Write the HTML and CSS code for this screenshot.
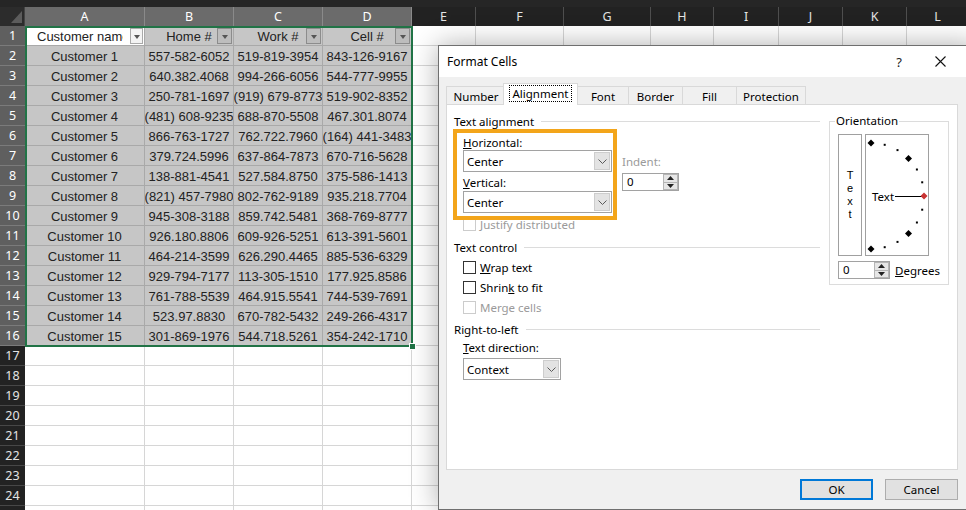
FILE: index.html
```html
<!DOCTYPE html>
<html>
<head>
<meta charset="utf-8">
<title>Format Cells</title>
<link rel="stylesheet" href="styles.css">
</head>
<body>
<div class="sheet">
  <div class="strip"></div>
  <div class="grid">
    <div class="row">
      <div class="corner"><svg width="25" height="19" viewBox="0 0 25 19"><path d="M11 16 L22 4 L22 16 Z" fill="#5c5c5c"/></svg></div>
      <div class="ch s">A</div><div class="ch s">B</div><div class="ch s">C</div><div class="ch s">D</div>
      <div class="ch">E</div><div class="ch">F</div><div class="ch">G</div><div class="ch">H</div><div class="ch">I</div><div class="ch">J</div><div class="ch">K</div><div class="ch">L</div>
    </div>
    <div class="row">
      <div class="rh s">1</div>
      <div class="c s a1"><span class="t">Customer name</span><span class="fb"></span></div>
      <div class="c s"><span class="t">Home #</span><span class="fb"></span></div>
      <div class="c s"><span class="t">Work #</span><span class="fb"></span></div>
      <div class="c s"><span class="t">Cell #</span><span class="fb"></span></div>
      <div class="c"></div><div class="c"></div><div class="c"></div><div class="c"></div><div class="c"></div><div class="c"></div><div class="c"></div><div class="c"></div>
    </div>
    <div class="row"><div class="rh s">2</div><div class="c s">Customer 1</div><div class="c s">557-582-6052</div><div class="c s">519-819-3954</div><div class="c s">843-126-9167</div><div class="c"></div><div class="c"></div><div class="c"></div><div class="c"></div><div class="c"></div><div class="c"></div><div class="c"></div><div class="c"></div></div>
    <div class="row"><div class="rh s">3</div><div class="c s">Customer 2</div><div class="c s">640.382.4068</div><div class="c s">994-266-6056</div><div class="c s">544-777-9955</div><div class="c"></div><div class="c"></div><div class="c"></div><div class="c"></div><div class="c"></div><div class="c"></div><div class="c"></div><div class="c"></div></div>
    <div class="row"><div class="rh s">4</div><div class="c s">Customer 3</div><div class="c s">250-781-1697</div><div class="c s">(919) 679-8773</div><div class="c s">519-902-8352</div><div class="c"></div><div class="c"></div><div class="c"></div><div class="c"></div><div class="c"></div><div class="c"></div><div class="c"></div><div class="c"></div></div>
    <div class="row"><div class="rh s">5</div><div class="c s">Customer 4</div><div class="c s">(481) 608-9235</div><div class="c s">688-870-5508</div><div class="c s">467.301.8074</div><div class="c"></div><div class="c"></div><div class="c"></div><div class="c"></div><div class="c"></div><div class="c"></div><div class="c"></div><div class="c"></div></div>
    <div class="row"><div class="rh s">6</div><div class="c s">Customer 5</div><div class="c s">866-763-1727</div><div class="c s">762.722.7960</div><div class="c s">(164) 441-3483</div><div class="c"></div><div class="c"></div><div class="c"></div><div class="c"></div><div class="c"></div><div class="c"></div><div class="c"></div><div class="c"></div></div>
    <div class="row"><div class="rh s">7</div><div class="c s">Customer 6</div><div class="c s">379.724.5996</div><div class="c s">637-864-7873</div><div class="c s">670-716-5628</div><div class="c"></div><div class="c"></div><div class="c"></div><div class="c"></div><div class="c"></div><div class="c"></div><div class="c"></div><div class="c"></div></div>
    <div class="row"><div class="rh s">8</div><div class="c s">Customer 7</div><div class="c s">138-881-4541</div><div class="c s">527.584.8750</div><div class="c s">375-586-1413</div><div class="c"></div><div class="c"></div><div class="c"></div><div class="c"></div><div class="c"></div><div class="c"></div><div class="c"></div><div class="c"></div></div>
    <div class="row"><div class="rh s">9</div><div class="c s">Customer 8</div><div class="c s">(821) 457-7980</div><div class="c s">802-762-9189</div><div class="c s">935.218.7704</div><div class="c"></div><div class="c"></div><div class="c"></div><div class="c"></div><div class="c"></div><div class="c"></div><div class="c"></div><div class="c"></div></div>
    <div class="row"><div class="rh s">10</div><div class="c s">Customer 9</div><div class="c s">945-308-3188</div><div class="c s">859.742.5481</div><div class="c s">368-769-8777</div><div class="c"></div><div class="c"></div><div class="c"></div><div class="c"></div><div class="c"></div><div class="c"></div><div class="c"></div><div class="c"></div></div>
    <div class="row"><div class="rh s">11</div><div class="c s">Customer 10</div><div class="c s">926.180.8806</div><div class="c s">609-926-5251</div><div class="c s">613-391-5601</div><div class="c"></div><div class="c"></div><div class="c"></div><div class="c"></div><div class="c"></div><div class="c"></div><div class="c"></div><div class="c"></div></div>
    <div class="row"><div class="rh s">12</div><div class="c s">Customer 11</div><div class="c s">464-214-3599</div><div class="c s">626.290.4465</div><div class="c s">885-536-6329</div><div class="c"></div><div class="c"></div><div class="c"></div><div class="c"></div><div class="c"></div><div class="c"></div><div class="c"></div><div class="c"></div></div>
    <div class="row"><div class="rh s">13</div><div class="c s">Customer 12</div><div class="c s">929-794-7177</div><div class="c s">113-305-1510</div><div class="c s">177.925.8586</div><div class="c"></div><div class="c"></div><div class="c"></div><div class="c"></div><div class="c"></div><div class="c"></div><div class="c"></div><div class="c"></div></div>
    <div class="row"><div class="rh s">14</div><div class="c s">Customer 13</div><div class="c s">761-788-5539</div><div class="c s">464.915.5541</div><div class="c s">744-539-7691</div><div class="c"></div><div class="c"></div><div class="c"></div><div class="c"></div><div class="c"></div><div class="c"></div><div class="c"></div><div class="c"></div></div>
    <div class="row"><div class="rh s">15</div><div class="c s">Customer 14</div><div class="c s">523.97.8830</div><div class="c s">670-782-5432</div><div class="c s">249-266-4317</div><div class="c"></div><div class="c"></div><div class="c"></div><div class="c"></div><div class="c"></div><div class="c"></div><div class="c"></div><div class="c"></div></div>
    <div class="row"><div class="rh s">16</div><div class="c s">Customer 15</div><div class="c s">301-869-1976</div><div class="c s">544.718.5261</div><div class="c s">354-242-1710</div><div class="c"></div><div class="c"></div><div class="c"></div><div class="c"></div><div class="c"></div><div class="c"></div><div class="c"></div><div class="c"></div></div>
    <div class="row"><div class="rh">17</div><div class="c"></div><div class="c"></div><div class="c"></div><div class="c"></div><div class="c"></div><div class="c"></div><div class="c"></div><div class="c"></div><div class="c"></div><div class="c"></div><div class="c"></div><div class="c"></div></div>
    <div class="row"><div class="rh">18</div><div class="c"></div><div class="c"></div><div class="c"></div><div class="c"></div><div class="c"></div><div class="c"></div><div class="c"></div><div class="c"></div><div class="c"></div><div class="c"></div><div class="c"></div><div class="c"></div></div>
    <div class="row"><div class="rh">19</div><div class="c"></div><div class="c"></div><div class="c"></div><div class="c"></div><div class="c"></div><div class="c"></div><div class="c"></div><div class="c"></div><div class="c"></div><div class="c"></div><div class="c"></div><div class="c"></div></div>
    <div class="row"><div class="rh">20</div><div class="c"></div><div class="c"></div><div class="c"></div><div class="c"></div><div class="c"></div><div class="c"></div><div class="c"></div><div class="c"></div><div class="c"></div><div class="c"></div><div class="c"></div><div class="c"></div></div>
    <div class="row"><div class="rh">21</div><div class="c"></div><div class="c"></div><div class="c"></div><div class="c"></div><div class="c"></div><div class="c"></div><div class="c"></div><div class="c"></div><div class="c"></div><div class="c"></div><div class="c"></div><div class="c"></div></div>
    <div class="row"><div class="rh">22</div><div class="c"></div><div class="c"></div><div class="c"></div><div class="c"></div><div class="c"></div><div class="c"></div><div class="c"></div><div class="c"></div><div class="c"></div><div class="c"></div><div class="c"></div><div class="c"></div></div>
    <div class="row"><div class="rh">23</div><div class="c"></div><div class="c"></div><div class="c"></div><div class="c"></div><div class="c"></div><div class="c"></div><div class="c"></div><div class="c"></div><div class="c"></div><div class="c"></div><div class="c"></div><div class="c"></div></div>
    <div class="row"><div class="rh">24</div><div class="c"></div><div class="c"></div><div class="c"></div><div class="c"></div><div class="c"></div><div class="c"></div><div class="c"></div><div class="c"></div><div class="c"></div><div class="c"></div><div class="c"></div><div class="c"></div></div>
    <div class="row"><div class="rh"></div><div class="c"></div><div class="c"></div><div class="c"></div><div class="c"></div><div class="c"></div><div class="c"></div><div class="c"></div><div class="c"></div><div class="c"></div><div class="c"></div><div class="c"></div><div class="c"></div></div>
  </div>
  <div class="selbox"><span class="handle"></span></div>
</div>

<div class="dialog">
  <div class="titlebar">
    <span class="title">Format Cells</span>
    <span class="help">?</span>
    <svg class="close" width="11" height="11" viewBox="0 0 11 11"><path d="M0.5 0.5 L10.5 10.5 M10.5 0.5 L0.5 10.5" stroke="#111" stroke-width="1.1" fill="none"/></svg>
  </div>
  <div class="tabs">
    <div class="tab w-number">Number</div>
    <div class="tab on w-align"><span class="focus">Alignment</span></div>
    <div class="tab w-font">Font</div>
    <div class="tab w-border">Border</div>
    <div class="tab w-fill">Fill</div>
    <div class="tab w-prot">Protection</div>
  </div>
  <div class="panel">
    <div class="left">
      <div class="gh">Text alignment</div>
      <div class="alignbody">
        <div class="col1">
          <div class="lbl"><u>H</u>orizontal:</div>
          <div class="combo"><span class="val">Center</span><span class="dd"><svg width="9" height="5" viewBox="0 0 9 5"><path d="M0.5 0.5 L4.5 4.5 L8.5 0.5" fill="none" stroke="#5a5a5a"/></svg></span></div>
          <div class="lbl lbl-v"><u>V</u>ertical:</div>
          <div class="combo combo-v"><span class="val">Center</span><span class="dd"><svg width="9" height="5" viewBox="0 0 9 5"><path d="M0.5 0.5 L4.5 4.5 L8.5 0.5" fill="none" stroke="#5a5a5a"/></svg></span></div>
        </div>
        <div class="col2">
          <div class="lbl dis indent">Indent:</div>
          <div class="spin"><span class="val">0</span><span class="btns"><span class="sb"><svg width="7" height="4" viewBox="0 0 7 4"><path d="M0 4 L3.5 0 L7 4 Z" fill="#222"/></svg></span><span class="sb"><svg width="7" height="4" viewBox="0 0 7 4"><path d="M0 0 L3.5 4 L7 0 Z" fill="#222"/></svg></span></span></div>
        </div>
      </div>
      <div class="chk justify dis"><span class="box"></span><span>Justify distributed</span></div>

      <div class="gh gh-tc">Text control</div>
      <div class="chk first"><span class="box on"></span><span><u>W</u>rap text</span></div>
      <div class="chk"><span class="box on"></span><span>Shrin<u>k</u> to fit</span></div>
      <div class="chk dis"><span class="box"></span><span>Merge cells</span></div>

      <div class="gh gh-rtl">Right-to-left</div>
      <div class="lbl lbl-dir"><u>T</u>ext direction:</div>
      <div class="combo combo-ctx"><span class="val">Context</span><span class="dd"><svg width="9" height="5" viewBox="0 0 9 5"><path d="M0.5 0.5 L4.5 4.5 L8.5 0.5" fill="none" stroke="#5a5a5a"/></svg></span></div>
    </div>

    <fieldset class="orient">
      <legend>Orientation</legend>
      <div class="orow">
        <div class="vtext"><span>T</span><span>e</span><span>x</span><span>t</span></div>
        <div class="dial">
          <svg width="62" height="120" viewBox="0 0 62 120">
            <path d="M5 4.5 L8.5 8 L5 11.5 L1.5 8 Z" fill="#000"/>
            <path d="M42.5 20 L46 23.5 L42.5 27 L39 23.5 Z" fill="#000"/>
            <path d="M42.5 95 L46 98.5 L42.5 102 L39 98.5 Z" fill="#000"/>
            <path d="M5 110.5 L8.5 114 L5 117.5 L1.5 114 Z" fill="#000"/>
            <rect x="17.7" y="8.8" width="2" height="2" fill="#000"/>
            <rect x="30.5" y="14.1" width="2" height="2" fill="#000"/>
            <rect x="49.9" y="33.5" width="2" height="2" fill="#000"/>
            <rect x="55.2" y="46.3" width="2" height="2" fill="#000"/>
            <rect x="55.2" y="73.7" width="2" height="2" fill="#000"/>
            <rect x="49.9" y="86.5" width="2" height="2" fill="#000"/>
            <rect x="30.5" y="105.9" width="2" height="2" fill="#000"/>
            <rect x="17.7" y="111.2" width="2" height="2" fill="#000"/>
            <line x1="29" y1="61.5" x2="56" y2="61.5" stroke="#000" stroke-width="1"/>
            <path d="M58 57.5 L61.5 61 L58 64.5 L54.5 61 Z" fill="#c83232"/>
            <text x="6" y="65.5" class="dialtext">Text</text>
          </svg>
        </div>
      </div>
      <div class="degrow">
        <div class="spin spin-deg"><span class="val">0</span><span class="btns"><span class="sb"><svg width="7" height="4" viewBox="0 0 7 4"><path d="M0 4 L3.5 0 L7 4 Z" fill="#222"/></svg></span><span class="sb"><svg width="7" height="4" viewBox="0 0 7 4"><path d="M0 0 L3.5 4 L7 0 Z" fill="#222"/></svg></span></span></div>
        <span class="deg"><u>D</u>egrees</span>
      </div>
    </fieldset>

    <div class="highlight"></div>
  </div>
  <div class="actions">
    <div class="btn def">OK</div>
    <div class="btn">Cancel</div>
  </div>
</div>
</body>
</html>
```
FILE: styles.css
```css
html, body {
  margin: 0;
  padding: 0;
}
body {
  width: 966px;
  height: 510px;
  overflow: hidden;
  position: relative;
  background: #ffffff;
  font-family: "Liberation Sans", Arial, sans-serif;
}

/* ---------- spreadsheet ---------- */
.sheet {
  position: relative;
}
.strip {
  height: 7px;
  background: #262626;
}
.grid {
  display: grid;
  grid-template-columns: 25px 120px 89px 89px 89px 64px 88px 87px 63px 65px 64px 64px 62px;
  grid-template-rows: 19px;
  grid-auto-rows: 20px;
}
.row {
  display: contents;
}
.corner {
  background: #2c2c2c;
  border-right: 1px solid #444;
}
.corner svg {
  display: block;
}
.ch {
  background: #222222;
  color: #e4e4e4;
  border-right: 1px solid #4e4e4e;
  display: flex;
  align-items: center;
  justify-content: center;
  font: 12.5px "Noto Sans", sans-serif;
}
.ch.s {
  background: #6b6b6b;
  color: #ffffff;
  border-right-color: #8a8a8a;
}
.rh {
  background: #222222;
  color: #e4e4e4;
  border-bottom: 1px solid #474747;
  display: flex;
  align-items: center;
  justify-content: center;
  font: 12.5px "Noto Sans", sans-serif;
}
.rh.s {
  background: #5f5f5f;
  color: #ffffff;
  border-bottom-color: #7b7b7b;
}
.c {
  position: relative;
  border-right: 1px solid #d6d6d6;
  border-bottom: 1px solid #d6d6d6;
  display: flex;
  align-items: center;
  justify-content: center;
  overflow: hidden;
  white-space: nowrap;
  font-size: 13px;
  color: #222;
  padding-top: 1px;
}
.c.s {
  background: #c6c6c6;
  border-color: #a9a9a9;
}
.c.a1 {
  background: #ffffff;
  justify-content: flex-start;
  padding-left: 12px;
}
.c .t {
  flex: none;
}
.c.a1 .t {
  width: 86px;
  overflow: hidden;
}
.fb {
  position: absolute;
  right: 1px;
  top: 2px;
  width: 15px;
  height: 16px;
  box-sizing: border-box;
  border: 1px solid #8c8c8c;
  background: #bdbdbd;
  display: flex;
  align-items: center;
  justify-content: center;
}
.a1 .fb {
  background: #f3f3f3;
  border-color: #a9a9a9;
  width: 13px;
}
.fb::after {
  content: "";
  border-left: 3.5px solid transparent;
  border-right: 3.5px solid transparent;
  border-top: 4px solid #555;
  margin-top: 1px;
}
.selbox {
  position: absolute;
  left: 25px;
  top: 26px;
  width: 388px;
  height: 321px;
  box-sizing: border-box;
  border: 2px solid #217346;
}
.handle {
  position: absolute;
  right: -4px;
  bottom: -4px;
  width: 5px;
  height: 5px;
  background: #217346;
  outline: 1px solid #ffffff;
}

/* ---------- dialog ---------- */
.dialog {
  position: absolute;
  left: 438px;
  top: 45px;
  width: 540px;
  height: 465px;
  box-sizing: border-box;
  border: 1px solid #6f6f6f;
  background: #f0f0f0;
  box-shadow: 0 0 26px rgba(0, 0, 0, 0.32);
  padding: 0 19px 0 7px;
  display: flex;
  flex-direction: column;
  font: 11.5px "Noto Sans", sans-serif;
  color: #000;
}
.titlebar {
  height: 31px;
  flex: none;
  background: #ffffff;
  margin: 0 -19px 0 -7px;
  padding: 0 31px 0 8px;
  display: flex;
  align-items: center;
  font-size: 12px;
}
.title {
  flex: 1;
}
.help {
  font-size: 13px;
  margin-right: 33px;
  color: #222;
}
.close {
  display: block;
}
.tabs {
  display: flex;
  align-items: flex-end;
  height: 21px;
  margin-top: 6px;
  position: relative;
  z-index: 2;
  flex: none;
}
.tab {
  height: 18px;
  box-sizing: border-box;
  border: 1px solid #d9d9d9;
  border-bottom: none;
  background: #f0f0f0;
  margin-right: -1px;
  display: flex;
  align-items: center;
  justify-content: center;
  padding-top: 1px;
}
.tab.on {
  height: 22px;
  margin-bottom: -1px;
  background: #ffffff;
  position: relative;
  z-index: 3;
  padding-top: 0;
  padding-bottom: 3px;
}
.w-number { width: 58px; padding-left: 2px; }
.w-align { width: 75px; }
.w-font { width: 52px; }
.w-border { width: 55px; }
.w-fill { width: 55px; }
.w-prot { width: 70px; }
.focus {
  outline: 1px dotted #000;
  padding: 0 3px;
  line-height: 15px;
}
.panel {
  height: 366px;
  flex: none;
  box-sizing: border-box;
  border: 1px solid #d9d9d9;
  background: #ffffff;
  position: relative;
  display: flex;
  align-items: flex-start;
}
.left {
  width: 373px;
  flex: none;
  padding-top: 8px;
}
.gh {
  display: flex;
  align-items: center;
  height: 16px;
  padding-left: 7px;
}
.gh::after {
  content: "";
  flex: 1;
  border-top: 1px solid #dcdcdc;
  margin-left: 7px;
}
.gh-tc { margin-top: 8px; }
.gh-rtl { margin-top: 4px; }
.alignbody {
  display: flex;
  padding-left: 16px;
  margin-top: 6px;
}
.col1 {
  width: 149px;
}
.col2 {
  margin-left: 10px;
  padding-top: 19px;
}
.lbl {
  height: 15px;
  line-height: 15px;
}
.lbl-v { margin-top: 3px; }
.indent { height: 16px; line-height: 16px; }
.dis { color: #9a9a9a; }
.combo {
  height: 22px;
  box-sizing: border-box;
  border: 1px solid #a2a2a2;
  background: #ffffff;
  display: flex;
}
.combo-v { margin-top: 1px; }
.combo .val {
  flex: 1;
  display: flex;
  align-items: center;
  padding-left: 3px;
}
.combo .dd {
  width: 16px;
  margin: 1px;
  box-sizing: border-box;
  background: #e3e3e3;
  border: 1px solid #cdcdcd;
  display: flex;
  align-items: center;
  justify-content: center;
}
.spin {
  margin-top: 3px;
  width: 57px;
  height: 18px;
  box-sizing: border-box;
  border: 1px solid #a2a2a2;
  background: #ffffff;
  display: flex;
}
.spin .val {
  flex: 1;
  padding-left: 4px;
  line-height: 16px;
}
.spin .btns {
  width: 15px;
  display: flex;
  flex-direction: column;
}
.spin .sb {
  flex: 1;
  background: #e6e6e6;
  border: 1px solid #b5b5b5;
  margin: 0 0 -1px 0;
  display: flex;
  align-items: center;
  justify-content: center;
}
.spin .sb:last-child { margin-bottom: 0; }
.spin svg { display: block; }
.chk {
  display: flex;
  align-items: center;
  height: 20px;
  padding-left: 16px;
}
.chk.justify {
  height: 14px;
  margin-top: 4px;
}
.chk.first { margin-top: 2px; }
.box {
  width: 13px;
  height: 13px;
  box-sizing: border-box;
  border: 1px solid #cccccc;
  background: #ffffff;
  margin-right: 4px;
}
.box.on {
  border-color: #333333;
}
.lbl-dir {
  margin: 3px 0 0 16px;
  height: 16px;
  line-height: 16px;
}
.combo-ctx {
  margin: 2px 0 0 16px;
  width: 98px;
}
.highlight {
  position: absolute;
  left: 6px;
  top: 24px;
  width: 164px;
  height: 91px;
  box-sizing: border-box;
  border: 4px solid #f3a51a;
}

/* orientation */
.orient {
  margin: 8px 0 0 9px;
  width: 120px;
  box-sizing: border-box;
  border: 1px solid #dcdcdc;
  padding: 0 8px 5px 8px;
  min-width: 0;
}
.orient legend {
  padding: 0 1px;
  margin-left: -3px;
  line-height: 16px;
}
.orow {
  display: flex;
  margin-top: 5px;
}
.vtext {
  width: 24px;
  height: 122px;
  box-sizing: border-box;
  border: 1px solid #a0a0a0;
  display: flex;
  flex-direction: column;
  align-items: center;
  justify-content: center;
  font: 11px "Liberation Sans", Arial, sans-serif;
}
.vtext span {
  display: block;
  height: 13px;
  line-height: 13px;
}
.dial {
  margin-left: 3px;
  width: 64px;
  height: 122px;
  box-sizing: border-box;
  border: 1px solid #a0a0a0;
}
.dial svg { display: block; }
.dialtext {
  font: 11.5px "Noto Sans", sans-serif;
  fill: #000;
}
.degrow {
  display: flex;
  align-items: center;
  margin-top: 5px;
}
.spin-deg {
  margin-top: 0;
  width: 58px;
}
.deg {
  margin-left: 5px;
}

/* buttons */
.actions {
  display: flex;
  justify-content: flex-end;
  gap: 12px;
  margin-top: 9px;
}
.btn {
  width: 73px;
  height: 21px;
  box-sizing: border-box;
  border: 1px solid #adadad;
  background: #e1e1e1;
  display: flex;
  align-items: center;
  justify-content: center;
}
.btn.def {
  border: 2px solid #0078d7;
}
```
